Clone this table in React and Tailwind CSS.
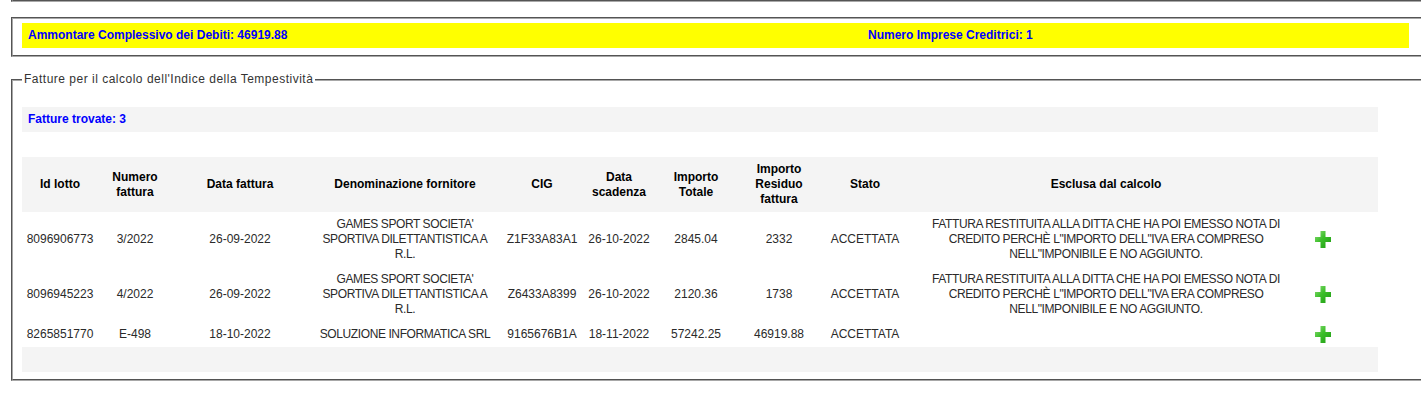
import React from 'react'

const ROWS = [
  {
    id: '8096906773',
    num: '3/2022',
    data: '26-09-2022',
    fornitore: "GAMES SPORT SOCIETA' SPORTIVA DILETTANTISTICA A R.L.",
    cig: 'Z1F33A83A1',
    scadenza: '26-10-2022',
    totale: '2845.04',
    residuo: '2332',
    stato: 'ACCETTATA',
    esclusa: 'FATTURA RESTITUITA ALLA DITTA CHE HA POI EMESSO NOTA DI CREDITO PERCHÈ L"IMPORTO DELL"IVA ERA COMPRESO NELL"IMPONIBILE E NO AGGIUNTO.',
  },
  {
    id: '8096945223',
    num: '4/2022',
    data: '26-09-2022',
    fornitore: "GAMES SPORT SOCIETA' SPORTIVA DILETTANTISTICA A R.L.",
    cig: 'Z6433A8399',
    scadenza: '26-10-2022',
    totale: '2120.36',
    residuo: '1738',
    stato: 'ACCETTATA',
    esclusa: 'FATTURA RESTITUITA ALLA DITTA CHE HA POI EMESSO NOTA DI CREDITO PERCHÈ L"IMPORTO DELL"IVA ERA COMPRESO NELL"IMPONIBILE E NO AGGIUNTO.',
  },
  {
    id: '8265851770',
    num: 'E-498',
    data: '18-10-2022',
    fornitore: 'SOLUZIONE INFORMATICA SRL',
    cig: '9165676B1A',
    scadenza: '18-11-2022',
    totale: '57242.25',
    residuo: '46919.88',
    stato: 'ACCETTATA',
    esclusa: '',
  },
]

const COLS = [76, 74, 136, 194, 80, 74, 80, 86, 86, 396, 74]

function PlusIcon() {
  return (
    <svg width="16" height="17" viewBox="0 0 16 17" className="block">
      <defs>
        <linearGradient id="pg" x1="0" y1="0" x2="1" y2="1">
          <stop offset="0" stopColor="#8fdc7a" />
          <stop offset="0.45" stopColor="#3cbf2a" />
          <stop offset="1" stopColor="#1e9a12" />
        </linearGradient>
      </defs>
      <path d="M5.5 0h5v6h5.5v5h-5.5v6h-5v-6h-5.5v-5h5.5z" fill="url(#pg)" />
    </svg>
  )
}

export default function App() {
  return (
    <div className="w-[1421px] h-[396px] overflow-hidden bg-white text-[12px] leading-[15px] text-[#2a2a2a] font-['Liberation_Sans',Arial,sans-serif]">
      {/* top box (only its bottom edge is visible) */}
      <div className="ml-[11px] w-[1430px] h-[24px] -mt-[22px] border-2 [border-style:groove] border-[#a8a8a8]" />

      {/* totals box */}
      <div className="ml-[11px] mt-[15px] w-[1430px] border-2 [border-style:groove] border-[#a8a8a8] pl-[9px] pt-[4px] pb-[7px]">
        <div className="w-[1387px] h-[25px] bg-[#ffff00] flex items-center font-bold text-[#0000ff]">
          <span className="pl-[6px] w-[846px]">Ammontare Complessivo dei Debiti: 46919.88</span>
          <span>Numero Imprese Creditrici: 1</span>
        </div>
      </div>

      {/* invoices fieldset */}
      <fieldset className="ml-[11px] mt-[15px] w-[1430px] border-2 [border-style:groove] border-[#a8a8a8] pl-[9px] pb-[7px]">
        <legend className="px-[2px] text-[#333] tracking-[0.5px]">Fatture per il calcolo dell'Indice della Tempestività</legend>

        <div className="mt-[20px] w-[1356px] h-[25px] bg-[#f4f4f4] flex items-center pl-[6px] font-bold text-[#0000ff]">
          Fatture trovate: 3
        </div>

        <table className="mt-[25px] w-[1356px] table-fixed border-collapse">
          <colgroup>
            {COLS.map((w, i) => (
              <col key={i} style={{ width: w }} />
            ))}
          </colgroup>
          <thead>
            <tr className="bg-[#f4f4f4] text-black font-bold">
              <th className="h-[55px] px-[4px] text-center">Id lotto</th>
              <th className="px-[4px] text-center">Numero fattura</th>
              <th className="px-[4px] text-center">Data fattura</th>
              <th className="px-[4px] text-center">Denominazione fornitore</th>
              <th className="px-[4px] text-center">CIG</th>
              <th className="px-[4px] text-center">Data scadenza</th>
              <th className="px-[4px] text-center">Importo Totale</th>
              <th className="px-[12px] text-center">Importo Residuo fattura</th>
              <th className="px-[4px] text-center">Stato</th>
              <th className="px-[4px] text-center">Esclusa dal calcolo</th>
              <th />
            </tr>
          </thead>
          <tbody>
            {ROWS.map((r) => (
              <tr key={r.id}>
                <td className="py-[5px] px-[2px] text-center">{r.id}</td>
                <td className="py-[5px] px-[2px] text-center">{r.num}</td>
                <td className="py-[5px] px-[2px] text-center">{r.data}</td>
                <td className="py-[5px] px-[8px] text-center tracking-[-0.4px]">{r.fornitore}</td>
                <td className="py-[5px] px-[2px] text-center">{r.cig}</td>
                <td className="py-[5px] px-[2px] text-center">{r.scadenza}</td>
                <td className="py-[5px] px-[2px] text-center">{r.totale}</td>
                <td className="py-[5px] px-[2px] text-center">{r.residuo}</td>
                <td className="py-[5px] px-[2px] text-center">{r.stato}</td>
                <td className="py-[5px] px-[12px] text-center tracking-[-0.4px]">{r.esclusa}</td>
                <td className="pl-[11px] align-middle">
                  <PlusIcon />
                </td>
              </tr>
            ))}
          </tbody>
        </table>

        <div className="w-[1356px] h-[25px] bg-[#f4f4f4]" />
      </fieldset>
    </div>
  )
}
